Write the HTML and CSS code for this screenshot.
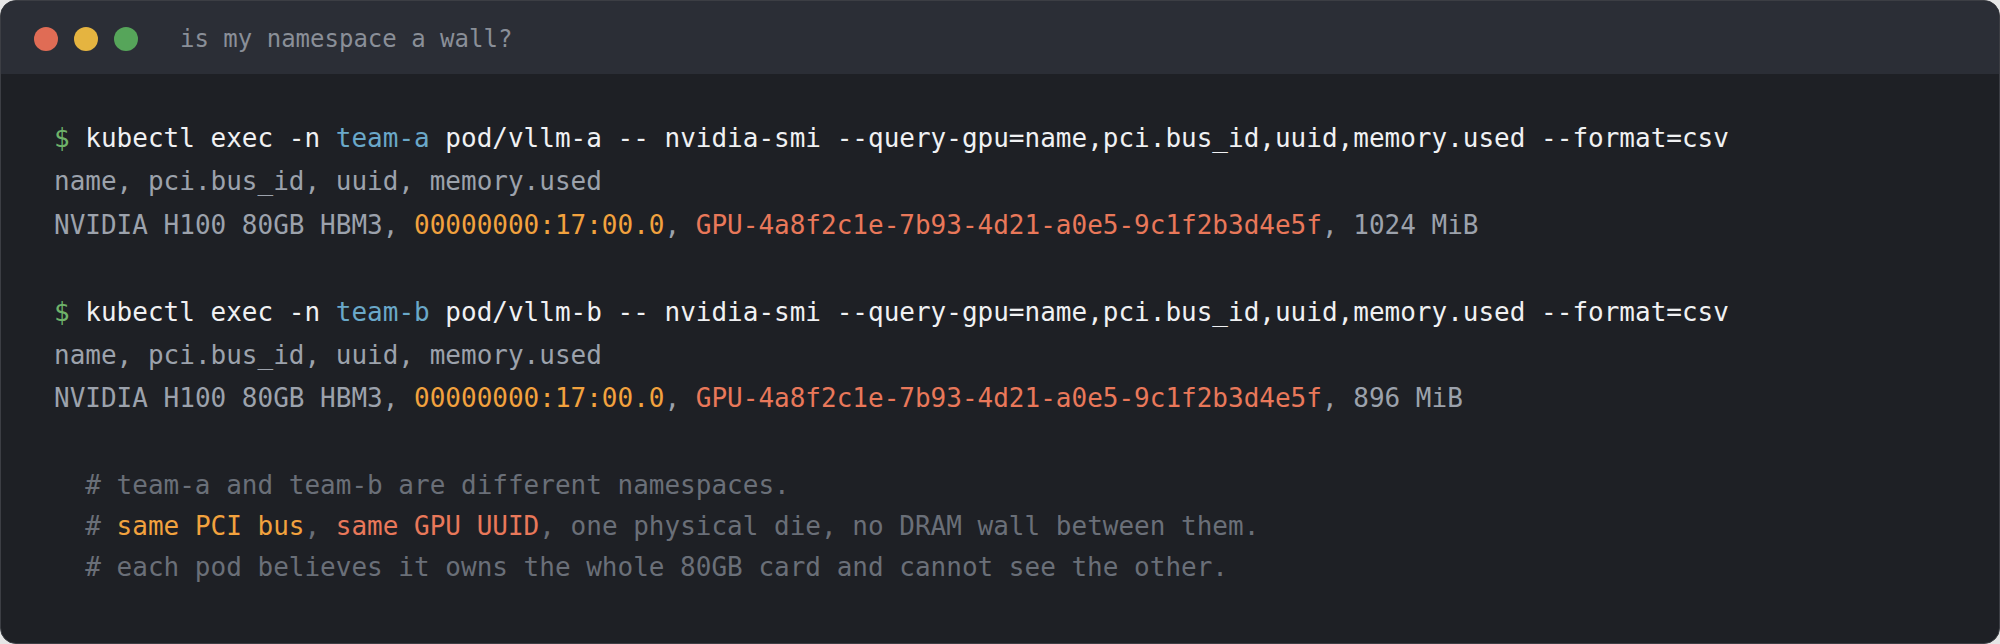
FILE: index.html
```html
<!DOCTYPE html>
<html>
<head>
<meta charset="utf-8">
<link rel="stylesheet" href="styles.css">
</head>
<body>
<div class="window">
  <div class="titlebar">
    <div class="dots">
      <span class="dot red"></span>
      <span class="dot yellow"></span>
      <span class="dot green"></span>
    </div>
    <div class="title">is my namespace a wall?</div>
  </div>
  <div class="term">
    <div class="block">
      <div class="line"><span class="prompt">$</span> <span class="cmd">kubectl exec -n </span><span class="ns">team-a</span><span class="cmd"> pod/vllm-a -- nvidia-smi --query-gpu=name,pci.bus_id,uuid,memory.used --format=csv</span></div>
      <div class="line out">name, pci.bus_id, uuid, memory.used</div>
      <div class="line out">NVIDIA H100 80GB HBM3, <span class="bus">00000000:17:00.0</span>, <span class="uuid">GPU-4a8f2c1e-7b93-4d21-a0e5-9c1f2b3d4e5f</span>, 1024 MiB</div>
    </div>
    <div class="block">
      <div class="line"><span class="prompt">$</span> <span class="cmd">kubectl exec -n </span><span class="ns">team-b</span><span class="cmd"> pod/vllm-b -- nvidia-smi --query-gpu=name,pci.bus_id,uuid,memory.used --format=csv</span></div>
      <div class="line out">name, pci.bus_id, uuid, memory.used</div>
      <div class="line out">NVIDIA H100 80GB HBM3, <span class="bus">00000000:17:00.0</span>, <span class="uuid">GPU-4a8f2c1e-7b93-4d21-a0e5-9c1f2b3d4e5f</span>, 896 MiB</div>
    </div>
    <div class="notes">
      <div class="note"># team-a and team-b are different namespaces.</div>
      <div class="note"># <span class="bus">same PCI bus</span>, <span class="uuid">same GPU UUID</span>, one physical die, no DRAM wall between them.</div>
      <div class="note"># each pod believes it owns the whole 80GB card and cannot see the other.</div>
    </div>
  </div>
</div>
</body>
</html>
```
FILE: styles.css
```css
html, body {
  margin: 0;
  padding: 0;
  background: #e6e6e6;
}
body {
  width: 2000px;
  height: 644px;
  overflow: hidden;
}
.window {
  box-sizing: border-box;
  width: 2000px;
  height: 644px;
  border: 1px solid #3c3e44;
  border-radius: 16px;
  overflow: hidden;
  background: #1e2025;
  display: flex;
  flex-direction: column;
  font-family: "DejaVu Sans Mono", "Liberation Mono", monospace;
}
.titlebar {
  height: 73px;
  background: #2b2e36;
  display: flex;
  align-items: center;
  padding-left: 33px;
  flex-shrink: 0;
}
.dots {
  display: flex;
  gap: 16px;
  margin-top: 2px;
}
.dot {
  width: 24px;
  height: 24px;
  border-radius: 50%;
  display: block;
}
.red { background: #e06c55; }
.yellow { background: #e5b440; }
.green { background: #56a55a; }
.title {
  margin-left: 42px;
  font-size: 24px;
  color: #8a8f98;
  margin-top: 2px;
}
.term {
  padding: 43px 53px 0 53px;
  font-size: 26px;
}
.line {
  white-space: pre;
  line-height: 43.4px;
  height: 43.4px;
}
.block + .block {
  margin-top: 43.4px;
}
.prompt { color: #6eb26a; }
.cmd { color: #f0f1f3; }
.ns { color: #6aa8c9; }
.out { color: #9ca2ac; }
.bus { color: #f2a23e; }
.uuid { color: #e9785a; }
.notes {
  margin-top: 44.6px;
  padding-left: 31.3px;
  color: #6a6f78;
}
.note {
  white-space: pre;
  line-height: 40.8px;
  height: 40.8px;
}
```
